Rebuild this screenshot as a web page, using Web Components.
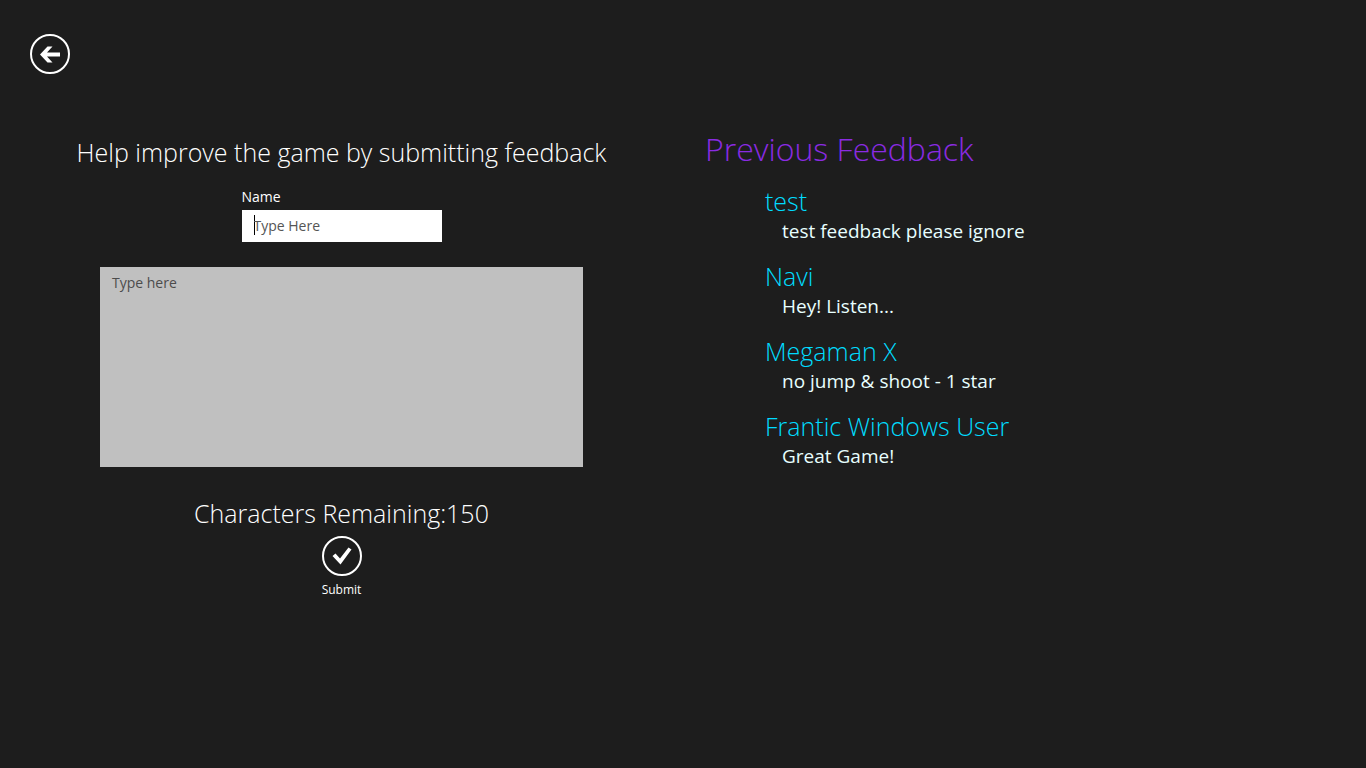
<!DOCTYPE html>
<html lang="en">
<head>
<meta charset="utf-8">
<meta name="viewport" content="width=device-width, initial-scale=1">
<title>Feedback</title>
<style>
  body { margin: 0; background: #1d1d1d; color: #fff; font-family: "Open Sans", "Noto Sans", sans-serif; }
</style>
</head>
<body>
<feedback-page></feedback-page>

<template id="page-template">
  <style>
    :host { display: block; min-height: 100vh; box-sizing: border-box; background: #1d1d1d; }
    header { padding: 34px 30px 0; }
    main { display: grid; grid-template-columns: 1fr 1fr; padding-top: 51px; }
  </style>
  <header>
    <round-button label="Back" icon="back"></round-button>
  </header>
  <main>
    <feedback-form></feedback-form>
    <feedback-list heading="Previous Feedback">
      <feedback-entry author="test">test feedback please ignore</feedback-entry>
      <feedback-entry author="Navi">Hey! Listen...</feedback-entry>
      <feedback-entry author="Megaman X">no jump &amp; shoot - 1 star</feedback-entry>
      <feedback-entry author="Frantic Windows User">Great Game!</feedback-entry>
    </feedback-list>
  </main>
</template>

<template id="button-template">
  <style>
    :host { display: block; }
    button { display: flex; flex-direction: column; align-items: center; gap: 4px; padding: 0; border: 0; background: none; color: #fff; font: 12px/20px "Open Sans", "Noto Sans", sans-serif; cursor: pointer; outline-offset: 4px; }
    svg { display: block; width: 40px; height: 40px; }
    circle { fill: none; stroke: #fff; stroke-width: 2; }
    .glyph { fill: #fff; }
  </style>
  <button type="button">
    <svg viewBox="0 0 40 40" aria-hidden="true"><circle cx="20" cy="20" r="19"/><path class="glyph"/></svg>
    <slot></slot>
  </button>
</template>

<template id="form-template">
  <style>
    :host { display: block; }
    form { display: flex; flex-direction: column; align-items: center; padding: 9px 0 24px; }
    h1, output { margin: 0; font-size: 25px; line-height: 36px; font-weight: 300; white-space: nowrap; }
    .name { display: flex; flex-direction: column; gap: 3px; width: 200px; margin-top: 17px; }
    label { font-size: 14px; line-height: 20px; }
    input, textarea { box-sizing: border-box; width: 100%; margin: 0; border: 0; border-radius: 0; font: 14px/20px "Open Sans", "Noto Sans", sans-serif; color: #000; }
    input { height: 32px; padding: 5px 12px 7px; background: #fff; outline: none; }
    input:placeholder-shown:not(:focus) { background: linear-gradient(#000, #000) 12px 5px / 1px 20px no-repeat #fff; }
    input::placeholder { color: #555; opacity: 1; }
    .message { align-self: stretch; display: flex; margin: 25px 100px 28px; }
    textarea { height: 200px; padding: 6px 12px; background: #c0c0c0; resize: none; }
    textarea::placeholder { color: #4c4c4c; opacity: 1; }
    round-button { margin-top: 5px; }
  </style>
  <form>
    <h1>Help improve the game by submitting feedback</h1>
    <div class="name">
      <label for="name">Name</label>
      <input id="name" type="text" placeholder="Type Here" autocomplete="off">
    </div>
    <div class="message">
      <textarea aria-label="Feedback" maxlength="150" placeholder="Type here"></textarea>
    </div>
    <output>Characters Remaining:150</output>
    <round-button icon="accept">Submit</round-button>
  </form>
</template>

<template id="list-template">
  <style>
    :host { display: block; }
    h2 { margin: 0 0 10px; padding-left: 22px; font-size: 32px; line-height: 48px; font-weight: 300; color: #8a2be2; }
    .entries { display: grid; gap: 15px; padding-left: 82px; }
  </style>
  <h2></h2>
  <div class="entries"><slot></slot></div>
</template>

<template id="entry-template">
  <style>
    :host { display: block; }
    h3 { margin: 0; font-size: 25px; line-height: 36px; font-weight: 300; color: #00dcff; }
    p { margin: 0; padding-left: 17px; font-size: 19px; line-height: 24px; color: #e8ffff; }
  </style>
  <h3></h3>
  <p><slot></slot></p>
</template>

<script>
  class TemplateElement extends HTMLElement {
    constructor() {
      super();
      const template = document.getElementById(this.constructor.template);
      this.attachShadow({ mode: "open" }).append(template.content.cloneNode(true));
    }
    find(selector) { return this.shadowRoot.querySelector(selector); }
  }

  const glyphs = {
    back: "M10 20.5L17.5 12.5H22.5L17 18.5H30V22.5H17L22.5 28.5H17.5Z",
    accept: "M10.5 20L13.5 17.500L18 22.500L26.500 11.500L29.500 13.500L18.500 28.500Z"
  };

  customElements.define("round-button", class extends TemplateElement {
    static template = "button-template";
    connectedCallback() {
      this.find(".glyph").setAttribute("d", glyphs[this.getAttribute("icon")]);
      if (this.hasAttribute("label")) this.find("button").setAttribute("aria-label", this.getAttribute("label"));
    }
  });

  customElements.define("feedback-form", class extends TemplateElement {
    static template = "form-template";
    connectedCallback() {
      const box = this.find("textarea");
      box.addEventListener("input", () => {
        this.find("output").textContent = "Characters Remaining:" + (box.maxLength - box.value.length);
      });
    }
  });

  customElements.define("feedback-entry", class extends TemplateElement {
    static template = "entry-template";
    connectedCallback() { this.find("h3").textContent = this.getAttribute("author"); }
  });

  customElements.define("feedback-list", class extends TemplateElement {
    static template = "list-template";
    connectedCallback() { this.find("h2").textContent = this.getAttribute("heading"); }
  });

  customElements.define("feedback-page", class extends TemplateElement {
    static template = "page-template";
  });
</script>
</body>
</html>
